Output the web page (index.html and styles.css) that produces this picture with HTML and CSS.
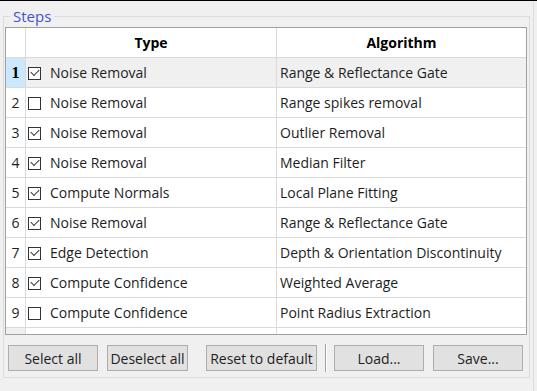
FILE: index.html
```html
<!DOCTYPE html>
<html lang="en">
<head>
    <meta charset="UTF-8">
    <title>Steps</title>
    <link rel="stylesheet" href="styles.css">
</head>
<body>
<div class="window">
    <fieldset class="group">
        <legend>Steps</legend>

        <div class="grid">
            <table>
                <colgroup>
                    <col class="c-num">
                    <col class="c-type">
                    <col class="c-algo">
                </colgroup>
                <thead>
                <tr>
                    <th class="num"></th>
                    <th>Type</th>
                    <th class="last">Algorithm</th>
                </tr>
                </thead>
                <tbody>
                <tr class="current">
                    <td class="num sel">1</td>
                    <td class="type"><span class="cb on"></span>Noise Removal</td>
                    <td class="last">Range &amp; Reflectance Gate</td>
                </tr>
                <tr>
                    <td class="num">2</td>
                    <td class="type"><span class="cb"></span>Noise Removal</td>
                    <td class="last">Range spikes removal</td>
                </tr>
                <tr>
                    <td class="num">3</td>
                    <td class="type"><span class="cb on"></span>Noise Removal</td>
                    <td class="last">Outlier Removal</td>
                </tr>
                <tr>
                    <td class="num">4</td>
                    <td class="type"><span class="cb on"></span>Noise Removal</td>
                    <td class="last">Median Filter</td>
                </tr>
                <tr>
                    <td class="num">5</td>
                    <td class="type"><span class="cb on"></span>Compute Normals</td>
                    <td class="last">Local Plane Fitting</td>
                </tr>
                <tr>
                    <td class="num">6</td>
                    <td class="type"><span class="cb on"></span>Noise Removal</td>
                    <td class="last">Range &amp; Reflectance Gate</td>
                </tr>
                <tr>
                    <td class="num">7</td>
                    <td class="type"><span class="cb on"></span>Edge Detection</td>
                    <td class="last">Depth &amp; Orientation Discontinuity</td>
                </tr>
                <tr>
                    <td class="num">8</td>
                    <td class="type"><span class="cb on"></span>Compute Confidence</td>
                    <td class="last">Weighted Average</td>
                </tr>
                <tr>
                    <td class="num">9</td>
                    <td class="type"><span class="cb"></span>Compute Confidence</td>
                    <td class="last">Point Radius Extraction</td>
                </tr>
                <tr class="filler">
                    <td class="num"></td>
                    <td></td>
                    <td class="last"></td>
                </tr>
                </tbody>
            </table>
        </div>

        <div class="buttons">
            <button class="btn w90">Select all</button>
            <button class="btn w81">Deselect all</button>
            <button class="btn w111 ml">Reset to default</button>
            <span class="sep"></span>
            <button class="btn w90">Load...</button>
            <button class="btn w90">Save...</button>
        </div>
    </fieldset>
    <div class="side"></div>
</div>
</body>
</html>
```

FILE: styles.css
```css
*{
    box-sizing: border-box;
}
body{
    margin: 0;
    background-color: #f0f0f0;
    border-top: 1px solid #000;
    font-family: "Open Sans", "Noto Sans", sans-serif;
    font-size: 14px;
    color: #1e1e1e;
    height: 391px;
    overflow: hidden;
}
.window{
    display: flex;
    height: 100%;
}
.group{
    margin: 6px 0 0 3px;
    padding: 2px 2px 6px 1px;
    width: 527px;
    height: 371px;
    min-inline-size: 0;
    border: 1px solid #dcdcdc;
}
.group legend{
    margin-left: 5px;
    padding: 0 3px;
    line-height: 18px;
    font-size: 15px;
    color: #3f55c5;
}
.side{
    margin-left: 3px;
    width: 4px;
    border-left: 1px solid #dcdcdc;
}

/* table */
.grid{
    width: 522px;
    height: 308px;
    border: 1px solid #a0a0a0;
    background-color: #fff;
}
.grid table{
    table-layout: fixed;
    border-collapse: separate;
    border-spacing: 0;
    width: 520px;
}
.c-num{ width: 20px; }
.c-type{ width: 251px; }
.c-algo{ width: 249px; }
.grid th,
.grid td{
    height: 30px;
    padding: 0 0 0 3px;
    border-right: 1px solid #dadada;
    border-bottom: 1px solid #dadada;
    text-align: left;
    font-weight: normal;
    white-space: nowrap;
    overflow: hidden;
}
.grid td.type{
    padding-left: 2px;
}
.grid th{
    text-align: center;
    font-weight: bold;
    color: #000;
    padding: 0;
}
.grid .last{
    border-right: none;
}
.grid .num{
    padding: 0;
    text-align: center;
}
.grid .num.sel{
    background-color: #cce8ff;
    font-weight: bold;
    color: #000;
}
.grid tr.current td{
    background-color: #f0f0f0;
}
.grid tr.current td.num{
    background-color: #cce8ff;
    font-family: "Liberation Serif", serif;
    font-size: 16px;
}
.grid tr.filler td{
    height: 6px;
    border-bottom: none;
}
.grid tr.filler td.num{
    background-color: #f0f0f0;
}

/* checkbox */
.cb{
    display: inline-block;
    position: relative;
    width: 13px;
    height: 13px;
    margin: 0 9px 0 0;
    border: 1px solid #333;
    background-color: #fff;
    vertical-align: -2px;
}
.cb.on::after{
    content: "";
    position: absolute;
    left: 2px;
    top: 1px;
    width: 7px;
    height: 4px;
    border-left: 1px solid #333;
    border-bottom: 1px solid #333;
    transform: rotate(-45deg);
    transform-origin: 50% 50%;
}

/* buttons */
.buttons{
    display: flex;
    align-items: center;
    margin-top: 9px;
    padding-left: 3px;
    gap: 9px;
}
.btn{
    height: 26px;
    padding: 0;
    margin: 0;
    border: 1px solid #adadad;
    background-color: #e1e1e1;
    font-family: "Open Sans", "Noto Sans", sans-serif;
    font-size: 14px;
    color: #1e1e1e;
}
.w90{ width: 90px; }
.w81{ width: 81px; }
.w111{ width: 111px; }
.ml{ margin-left: 9px; }
.sep{
    width: 2px;
    height: 28px;
    margin: 0 -2px 0 -1px;
    border-left: 1px solid #a0a0a0;
    border-right: 1px solid #fff;
}
```
